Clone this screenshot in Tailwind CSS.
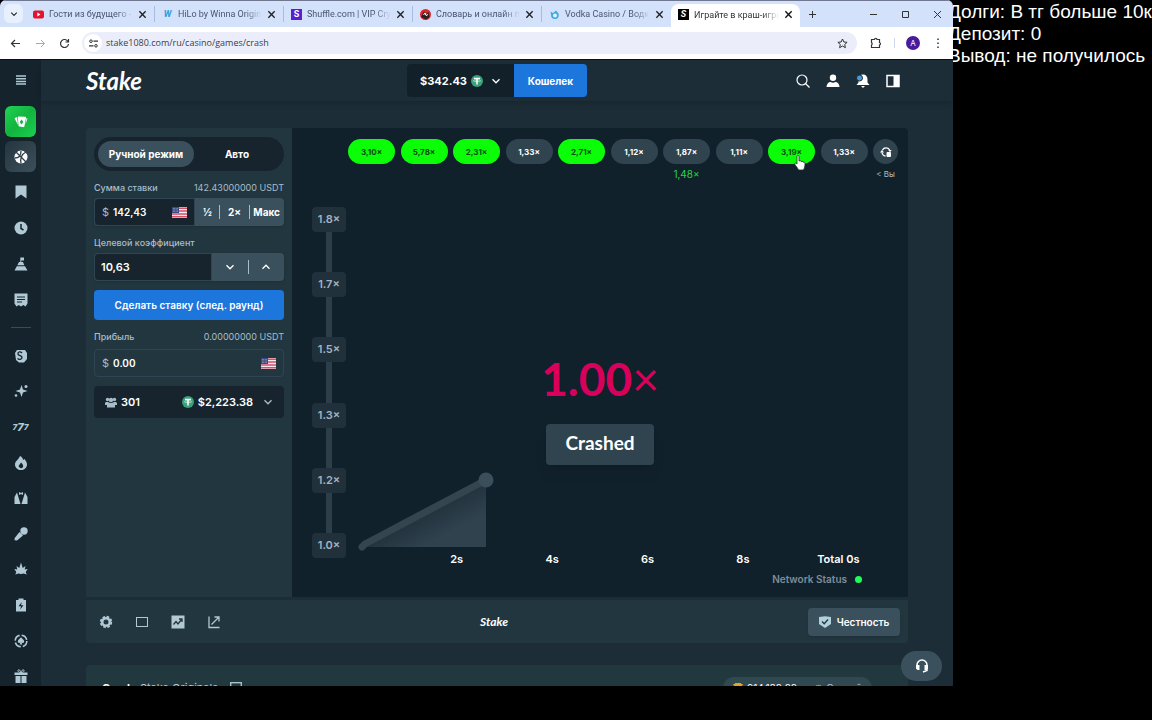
<!DOCTYPE html>
<html lang="ru">
<head>
  <meta charset="UTF-8" />
  <meta name="viewport" content="width=device-width, initial-scale=1.0"/>
  <title>Crash</title>
  <script src="https://cdn.jsdelivr.net/npm/@tailwindcss/browser@4"></script>
</head>
<body class="bg-black h-screen overflow-hidden flex pb-[34px] text-[11px] leading-4 font-['Inter','Noto_Sans',sans-serif]">

  <!-- shared shapes -->
  <svg class="hidden">
    <symbol id="flag" viewBox="0 0 15 11">
      <rect width="15" height="11" fill="#f3e9ee"/>
      <path d="M0 1.2h15M0 4h15M0 7h15M0 9.8h15" stroke="#d4506a" stroke-width="1.4"/>
      <rect width="7" height="6" fill="#3a4a80"/>
      <path d="M1 1.5h5M1 3h5M1 4.5h5" stroke="#c9d0e8" stroke-width=".6" stroke-dasharray=".7 .7"/>
    </symbol>
    <symbol id="tether" viewBox="0 0 12 12">
      <circle cx="6" cy="6" r="6" fill="#3aa27a"/>
      <path d="M3 3.6h6M6 3.6v6" stroke="#fff" stroke-width="1.5"/>
      <ellipse cx="6" cy="5.8" rx="3.6" ry=".9" fill="none" stroke="#fff" stroke-width=".5"/>
    </symbol>
    <symbol id="down" viewBox="0 0 10 10"><path d="M1.5 3.2 5 6.8l3.500-3.600" fill="none" stroke="currentColor" stroke-width="1.3"/></symbol>
    <symbol id="close" viewBox="0 0 8 8"><path d="M1.200 1.200 6.800 6.800M6.800 1.200 1.200 6.800" stroke="currentColor" stroke-width="1.200"/></symbol>
  </svg>

  <div class="relative flex-1 min-w-0 flex flex-col overflow-hidden rounded-t-md">

    <!-- tab strip -->
    <div class="h-[27px] shrink-0 flex bg-[#d3e1fb] border-t border-[#6f7890] text-[9px] text-[#4a5570] font-['Roboto','Noto_Sans',sans-serif]">
      <button class="size-[19px] mt-[3px] ml-1 mr-[3px] shrink-0 rounded-md bg-[#e8f0fe] text-[#222] flex items-center justify-center" aria-label="Поиск вкладок"><svg class="size-2"><use href="#down"/></svg></button>
      <div class="w-[129px] flex items-center gap-[5px] px-[7px] my-[5px] border-r border-[#a9bbe0]">
        <svg class="size-[11px] shrink-0" viewBox="0 0 11 11"><rect y="1.500" width="11" height="8" rx="2" fill="#e3122f"/><path d="M4.300 3.500v4l3.200-2z" fill="#fff"/></svg>
        <a href="#" class="flex-1 whitespace-nowrap overflow-hidden mask-r-from-80%">Гости из будущего - 6</a>
        <button class="shrink-0 text-[#222]" aria-label="Закрыть"><svg class="size-[9px]"><use href="#close"/></svg></button>
      </div>
      <div class="w-[129px] flex items-center gap-[5px] px-[7px] my-[5px] border-r border-[#a9bbe0]">
        <span class="w-[11px] shrink-0 text-center font-bold italic text-[#2b9fdc]">W</span>
        <a href="#" class="flex-1 whitespace-nowrap overflow-hidden mask-r-from-80%">HiLo by Winna Origina</a>
        <button class="shrink-0 text-[#222]" aria-label="Закрыть"><svg class="size-[9px]"><use href="#close"/></svg></button>
      </div>
      <div class="w-[129px] flex items-center gap-[5px] px-[7px] my-[5px] border-r border-[#a9bbe0]">
        <span class="size-[11px] leading-[11px] shrink-0 text-center font-bold bg-[#5a1fd0] text-white">S</span>
        <a href="#" class="flex-1 whitespace-nowrap overflow-hidden mask-r-from-80%">Shuffle.com | VIP Cryp</a>
        <button class="shrink-0 text-[#222]" aria-label="Закрыть"><svg class="size-[9px]"><use href="#close"/></svg></button>
      </div>
      <div class="w-[129px] flex items-center gap-[5px] px-[7px] my-[5px] border-r border-[#a9bbe0]">
        <svg class="size-[11px] shrink-0" viewBox="0 0 11 11"><circle cx="5.500" cy="5.500" r="5.500" fill="#d5282c"/><path d="M1 8 4 2.500l2 3 2.500-2.500 1 5-3.500 2.500z" fill="#2b2024"/><path d="m3.500 6 1.500-2 1 2.500 2-1" stroke="#fff" fill="none"/></svg>
        <a href="#" class="flex-1 whitespace-nowrap overflow-hidden mask-r-from-80%">Словарь и онлайн пе</a>
        <button class="shrink-0 text-[#222]" aria-label="Закрыть"><svg class="size-[9px]"><use href="#close"/></svg></button>
      </div>
      <div class="w-[129px] flex items-center gap-[5px] px-[7px] my-[5px]">
        <svg class="size-[11px] shrink-0" viewBox="0 0 11 11"><path d="M1.500 2.500 4 4l3-2.500 2.500 3C10.500 8 8.500 10 6 10S1.800 8.500 2 5.500z" fill="#3fa9e6"/><circle cx="6" cy="6.500" r="2" fill="#e3f3ff"/></svg>
        <a href="#" class="flex-1 whitespace-nowrap overflow-hidden mask-r-from-80%">Vodka Casino / Водка</a>
        <button class="shrink-0 text-[#222]" aria-label="Закрыть"><svg class="size-[9px]"><use href="#close"/></svg></button>
      </div>
      <div class="w-[129px] flex items-center gap-[5px] px-[7px] mt-[3px] pb-[2px] bg-white rounded-t-lg text-[#333]">
        <span class="size-[11px] leading-[11px] shrink-0 text-center font-bold italic bg-black text-white">S</span>
        <a href="#" class="flex-1 whitespace-nowrap overflow-hidden mask-r-from-80%">Играйте в краш-игры</a>
        <button class="shrink-0 text-[#111]" aria-label="Закрыть"><svg class="size-[9px]"><use href="#close"/></svg></button>
      </div>
      <div class="flex-1 flex items-center justify-between pl-2 pr-[11px] text-[#333]">
        <button aria-label="Новая вкладка"><svg class="size-[9px]" viewBox="0 0 9 9"><path d="M4.500 1v7M1 4.500h7" stroke="currentColor"/></svg></button>
        <div class="flex gap-[23px]">
          <button aria-label="Свернуть"><svg class="size-[9px]" viewBox="0 0 9 9"><path d="M1 4.500h7" stroke="currentColor"/></svg></button>
          <button aria-label="Развернуть"><svg class="size-[9px]" viewBox="0 0 9 9"><path d="M1.500 1.500h6v6h-6z" fill="none" stroke="currentColor"/></svg></button>
          <button aria-label="Закрыть окно"><svg class="size-[9px]" viewBox="0 0 9 9"><path d="m1 1 7 7M8 1 1 8" stroke="currentColor"/></svg></button>
        </div>
      </div>
    </div>

    <!-- address bar -->
    <div class="h-[33px] shrink-0 flex items-center bg-white border-b border-[#111] px-[10px] text-[#333]">
      <button aria-label="Назад"><svg class="size-[11px]" viewBox="0 0 11 11"><path d="M10 5.500H1.500M5 2 1.500 5.500 5 9" fill="none" stroke="currentColor" stroke-width="1.200"/></svg></button>
      <button class="ml-[14px] text-[#aaa]" aria-label="Вперёд"><svg class="size-[11px]" viewBox="0 0 11 11"><path d="M1 5.500h8.500M6 2l3.500 3.500L6 9" fill="none" stroke="currentColor"/></svg></button>
      <button class="ml-[13px]" aria-label="Обновить"><svg class="size-[11px]" viewBox="0 0 11 11"><path d="M9 3.500A4 4 0 1 0 9.500 6M9.500 1v3h-3" fill="none" stroke="currentColor" stroke-width="1.200"/></svg></button>
      <div class="ml-3 flex-1 h-[22px] rounded-full bg-[#ebeefa] flex items-center pl-[2px] pr-[9px]">
        <span class="size-[18px] rounded-full bg-white flex items-center justify-center"><svg class="size-[9px]" viewBox="0 0 9 9"><path d="M4.500 2.200H9M0 6.800h4.500" stroke="currentColor" stroke-width="1.200"/><circle cx="2" cy="2.200" r="1.300" fill="none" stroke="currentColor"/><circle cx="7" cy="6.800" r="1.300" fill="none" stroke="currentColor"/></svg></span>
        <input type="text" aria-label="Адрес" value="stake1080.com/ru/casino/games/crash" class="flex-1 min-w-0 ml-1 bg-transparent text-[9px] text-[#3c4043] font-['Open_Sans',sans-serif]"/>
        <button aria-label="В закладки"><svg class="size-[11px]" viewBox="0 0 11 11"><path d="m5.500 1 1.400 3 3.200.3-2.400 2.200.7 3.200-2.900-1.700-2.900 1.700.7-3.200L.900 4.300l3.200-.3z" fill="none" stroke="currentColor"/></svg></button>
      </div>
      <button class="ml-[13px]" aria-label="Расширения"><svg class="size-3" viewBox="0 0 12 12"><path d="M1.500 2.500h3a1.200 1.200 0 0 1 2.500 0h2.500v3a1.300 1.300 0 0 1 0 2.500v2.500h-8V8a1.500 1.500 0 0 0 0-2.500z" fill="none" stroke="currentColor" stroke-width="1.200"/></svg></button>
      <span class="ml-3 w-px h-[10px] bg-[#cfd8ee]"></span>
      <button class="ml-[11px] size-[14px] rounded-full bg-[#4a1a9c] text-white text-[8px] leading-[14px]">A</button>
      <button class="ml-[13px]" aria-label="Меню"><svg class="w-[10px] h-3" viewBox="0 0 10 12"><path d="M5 1.500v9.500" stroke="currentColor" stroke-width="1.500" stroke-dasharray="1.500 2.500"/></svg></button>
    </div>

    <div class="flex-1 min-h-0 flex bg-[#1c2d37]">

      <!-- sidebar -->
      <nav class="w-[41px] shrink-0 flex flex-col items-center bg-[#15232c] text-[#b1c9d4]">
        <button class="h-10 w-full shrink-0 flex items-center justify-center" aria-label="Меню"><svg class="size-[10px]" viewBox="0 0 10 10"><path d="M0 1h10M0 3.700h10M0 6.400h10M0 9.100h10" stroke="currentColor" stroke-width="1.500"/></svg></button>
        <a href="#" aria-label="Казино" class="mt-[6px] size-[31px] shrink-0 rounded-md bg-linear-to-br from-[#1fd355] via-[#12b43d] to-[#1cd052] text-white flex items-center justify-center">
          <svg class="size-[14px]" viewBox="0 0 14 14" fill="currentColor"><path d="M.5 3.200 3 2l1 8zM4.500 1.500l6.500.3c.8 0 1.200.5 1 1.300L10.500 11c-.2 1-.8 1.300-1.600 1.100L5.500 11.500c-.7-.1-1-.6-1-1.300L3.800 2.300c0-.5.3-.8.7-.8zM12.500 3l1 .5-2 6z"/><path d="m7.800 4.500 1.500 2.700-2 2.300-1.500-2.700z" fill="#12b43d"/></svg></a>
        <a href="#" aria-label="Спорт" class="mt-1 size-[31px] shrink-0 rounded-md bg-linear-to-br from-[#26353e] to-[#3b505c] text-white flex items-center justify-center">
          <svg class="size-[14px]" viewBox="0 0 14 14"><circle cx="7" cy="7" r="6.500" fill="currentColor"/><path d="m2 2 10 10M12 2C8 4 6 8 7 13.500M1 8c3 0 6-2 6-7" stroke="#2e3f4a" stroke-width="1.300" fill="none"/></svg></a>
        <div class="mt-[2px] shrink-0">
          <a href="#" aria-label="Избранное" class="h-9 flex items-center"><svg class="size-[14px]" viewBox="0 0 14 14" fill="currentColor"><path d="M1.500.500h11v13L7 9.500l-5.500 4z"/></svg></a>
          <a href="#" aria-label="Недавние" class="h-9 flex items-center"><svg class="size-[14px]" viewBox="0 0 14 14"><circle cx="7" cy="7" r="6.500" fill="currentColor"/><path d="M7 3v4.500l2.500 1.500" stroke="#15232c" stroke-width="1.500" fill="none"/></svg></a>
          <a href="#" aria-label="Испытания" class="h-9 flex items-center"><svg class="size-[14px]" viewBox="0 0 14 14" fill="currentColor"><path d="M6.300.500H10v3H7.300V5H9l1.300 3.200H3.300L5 5h1.300zM2.800 9.200h8.200l2.500 4.300H.500z"/></svg></a>
          <a href="#" aria-label="Ставки" class="h-9 flex items-center"><svg class="size-[14px]" viewBox="0 0 14 14"><path d="M.500.500h13v10l-2 3-2.200-1.500L7 13.500 4.700 12l-2.200 1.500-2-3z" fill="currentColor"/><path d="M3 4h8M3 6.500h8M3 9h5" stroke="#15232c" stroke-width="1.200"/></svg></a>
        </div>
        <hr class="w-5 mt-[9px] mb-[10px] shrink-0 border-[#3a4c57]"/>
        <div class="flex-1 min-h-0 -mb-2 flex flex-col">
          <a href="#" aria-label="Stake Originals" class="flex-1 flex items-center"><svg class="size-[14px]" viewBox="0 0 14 14"><path d="M3 1h8l2 3v6l-3 3.500H5L2 11 1 4z" fill="currentColor"/><path d="M8 4C6 2 3.500 3 4 5s4 1.500 4 3.500S5 11 3.500 9.500" fill="none" stroke="#15232c" stroke-width="1.300"/></svg></a>
          <a href="#" aria-label="Эксклюзив" class="flex-1 flex items-center"><svg class="size-[14px]" viewBox="0 0 14 14" fill="currentColor"><path d="M7.500 1 9 5.500 13.500 7 9 8.500 7.500 13 6 8.500 1.500 7 6 5.500z"/><circle cx="2" cy="11.500" r="1.300"/><circle cx="12" cy="2.500" r="1.500"/></svg></a>
          <a href="#" aria-label="Слоты" class="flex-1 flex items-center justify-center w-[14px] font-extrabold italic text-[8px]"><span>7</span><span class="text-[11px]">7</span><span>7</span></a>
          <a href="#" aria-label="Популярное" class="flex-1 flex items-center"><svg class="size-[14px]" viewBox="0 0 14 14"><path d="M6 0c2 1 3 2.500 3 4l1.500-1C12 5 13 6.500 13 8.500 13 12 10 14 7 14s-6-2-6-5.500C1 5 4.500 4 6 0z" fill="currentColor"/><path d="M7 6.500c2 2 2.500 3 2 4.500S6 12.500 5 11s1-2.500 2-4.500z" fill="#15232c"/></svg></a>
          <a href="#" aria-label="Живые игры" class="flex-1 flex items-center"><svg class="size-[14px]" viewBox="0 0 14 14" fill="currentColor"><path d="M3 1.500 6.500 13H.500V6zM11 1.500 7.500 13h6V6zM5 1l2 1 2-1v3L7 3 5 4z"/></svg></a>
          <a href="#" aria-label="Шоу" class="flex-1 flex items-center"><svg class="size-[14px]" viewBox="0 0 14 14" fill="currentColor"><circle cx="10" cy="4" r="3.700"/><path d="m5.500 5 3.500 3.500L3 13.500.500 13.300l.200-2.300z"/></svg></a>
          <a href="#" aria-label="Новинки" class="flex-1 flex items-center"><svg class="size-[14px]" viewBox="0 0 14 14" fill="currentColor"><path d="m7 .500 1.700 5.500 2.800-2-.8 3.500 3-.5-2 3 1 2.500-3-1L7 12l-2.700-.5-3 1 1-2.500-2-3 3 .5L2.500 4l2.800 2z"/></svg></a>
          <a href="#" aria-label="Турбо" class="flex-1 flex items-center"><svg class="size-[14px]" viewBox="0 0 14 14"><path d="M4.500.500h5V2H12v11.500H2V2h2.500z" fill="currentColor"/><path d="M7.800 4 4.500 8.300H7L6.200 11.500l3.300-4.300H7z" fill="#15232c"/></svg></a>
          <a href="#" aria-label="Покер" class="flex-1 flex items-center"><svg class="size-[14px]" viewBox="0 0 14 14"><circle cx="7" cy="7" r="5.800" fill="none" stroke="currentColor" stroke-width="1.600" stroke-dasharray="7 2.100"/><path d="M7 3.200c1 1.500 3.200 2.500 3.200 4.300 0 1.400-1.700 2-2.600 1.100l.7 2H5.700l.7-2c-.9.900-2.600.3-2.600-1.100C3.800 5.700 6 4.700 7 3.200z" fill="currentColor"/></svg></a>
          <a href="#" aria-label="Акции" class="flex-1 flex items-center"><svg class="size-[14px]" viewBox="0 0 14 14" fill="currentColor"><path d="M.500 3.500h13V6H.500zM1.500 7h5v7h-5zM7.500 7h5v7h-5z"/><path d="M7 3.500C5 3.500 3.500 2.500 4 1.300S6.500 1 7 3.500c.5-2.500 2.500-3.400 3-2.200S9 3.500 7 3.500z" fill="none" stroke="currentColor"/></svg></a>
        </div>
      </nav>

      <main class="flex-1 min-w-0 flex flex-col text-white">
        <header class="h-[41px] shrink-0 px-[45px] grid grid-cols-[1fr_auto_1fr] items-center shadow-md">
          <a href="#" class="font-['Lato',sans-serif] font-bold italic text-[24px] leading-8">Stake</a>
          <div class="flex h-[33px] font-bold">
            <button class="w-[107px] rounded-l bg-[#12202a] flex items-center justify-center gap-1">$342.43 <svg class="size-3"><use href="#tether"/></svg><svg class="size-[10px] ml-1"><use href="#down"/></svg></button>
            <button class="w-[73px] rounded-r bg-[#1c76dc] text-[10px]">Кошелек</button>
          </div>
          <div class="flex justify-end gap-4 pr-2">
            <button aria-label="Поиск"><svg class="size-[14px]" viewBox="0 0 14 14"><circle cx="6" cy="6" r="5" fill="none" stroke="currentColor" stroke-width="1.200"/><path d="m9.500 9.500 4 4" stroke="currentColor" stroke-width="1.200"/></svg></button>
            <button aria-label="Профиль"><svg class="size-[14px]" viewBox="0 0 14 14" fill="currentColor"><circle cx="7" cy="3.700" r="3.200"/><path d="M.500 13c0-3 2-5 4-5 1.500 1 3.500 1 5 0 2 0 4 2 4 5z"/></svg></button>
            <button aria-label="Уведомления"><svg class="size-[14px]" viewBox="0 0 14 14" fill="currentColor"><path d="M7 .500c3 0 4.500 2 4.500 5v3l2 2.500H.500l2-2.500v-3C2.500 2.500 4 .500 7 .500zM5 12h4l-2 2z"/><circle cx="3.500" cy="4" r="3" fill="#4c9bd8" stroke="#1c2d37"/></svg></button>
            <button aria-label="Чат"><svg class="size-[14px]" viewBox="0 0 14 14"><rect x="1" y="1.500" width="12" height="11" fill="none" stroke="currentColor" stroke-width="1.500"/><path d="M7.500 1.500H13v11H7.500z" fill="currentColor"/></svg></button>
          </div>
        </header>

        <div class="px-[45px] pt-[27px]">
          <div class="flex rounded-t overflow-hidden bg-[#22363f] h-[469px]">

            <!-- bet form -->
            <form class="w-[206px] shrink-0 px-2 pt-[9px] flex flex-col gap-[9px]">
              <div class="h-[34px] p-1 rounded-full bg-[#17242d] grid grid-cols-[96px_1fr] font-bold text-[10px]">
                <button type="button" class="rounded-full bg-[#3a505c]">Ручной режим</button>
                <button type="button">Авто</button>
              </div>
              <div>
                <div class="flex justify-between h-4 mb-[2px] text-[9px] text-[#a9bdc8]"><label for="bet" class="font-medium">Сумма ставки</label><span>142.43000000 USDT</span></div>
                <div class="flex h-7 rounded-sm bg-[#3a505c] shadow">
                  <div class="w-[101px] flex items-center px-[7px] rounded-l-sm bg-[#17242d] border border-[#2f4553]">
                    <span class="text-[#a9bdc8]">$</span>
                    <input id="bet" type="text" value="142,43" class="flex-1 min-w-0 ml-1 font-semibold text-[10px] bg-transparent"/>
                    <svg class="w-[15px] h-[11px] shrink-0"><use href="#flag"/></svg>
                  </div>
                  <div class="flex-1 flex items-center justify-between px-1 font-bold text-[10px]">
                    <button type="button" class="px-1">½</button><span class="w-px h-[14px] bg-[#a9bdc8]"></span>
                    <button type="button" class="px-1">2×</button><span class="w-px h-[14px] bg-[#a9bdc8]"></span>
                    <button type="button">Макс</button>
                  </div>
                </div>
              </div>
              <div>
                <label for="target" class="block h-4 mb-[2px] text-[9px] font-medium text-[#a9bdc8]">Целевой коэффициент</label>
                <div class="flex h-7 rounded-sm bg-[#3a505c] shadow">
                  <input id="target" type="text" value="10,63" class="w-[118px] px-[6px] font-semibold rounded-l-sm bg-[#17242d] border border-[#2f4553]"/>
                  <div class="flex-1 flex items-center">
                    <button type="button" class="flex-1 flex justify-center" aria-label="Меньше"><svg class="size-[10px]"><use href="#down"/></svg></button>
                    <span class="w-px h-[14px] bg-[#a9bdc8]"></span>
                    <button type="button" class="flex-1 flex justify-center" aria-label="Больше"><svg class="size-[10px] rotate-180"><use href="#down"/></svg></button>
                  </div>
                </div>
              </div>
              <button type="button" class="h-[30px] rounded bg-[#1c76dc] font-semibold text-[10px]">Сделать ставку (след. раунд)</button>
              <div>
                <div class="flex justify-between h-4 mb-1 text-[9px] text-[#a9bdc8]"><label for="profit" class="font-medium">Прибыль</label><span>0.00000000 USDT</span></div>
                <div class="flex items-center h-7 px-[7px] rounded-sm border border-[#2f4553]">
                  <span class="text-[#a9bdc8]">$</span>
                  <input id="profit" type="text" value="0.00" readonly class="flex-1 min-w-0 ml-1 font-semibold text-[10px] bg-transparent"/>
                  <svg class="w-[15px] h-[11px] shrink-0"><use href="#flag"/></svg>
                </div>
              </div>
              <button type="button" class="h-8 px-[11px] rounded bg-[#17242d] flex items-center font-semibold">
                <svg class="w-3 h-[11px] text-[#a9bdc8]" viewBox="0 0 12 11" fill="currentColor"><circle cx="2.500" cy="2.500" r="1.700"/><circle cx="9.500" cy="2.500" r="1.700"/><circle cx="6" cy="3" r="2.200"/><path d="M0 8V6.500C0 5 1.500 4.700 3 5c1.500 1.300 4.500 1.300 6 0 1.500-.3 3 0 3 1.500V8h-2v2.500H2V8z"/></svg>
                <span class="ml-1">301</span>
                <svg class="size-3 ml-auto"><use href="#tether"/></svg>
                <span class="ml-1">$2,223.38</span>
                <svg class="size-[10px] ml-[10px] text-[#a9bdc8]"><use href="#down"/></svg>
              </button>
            </form>

            <!-- graph -->
            <section class="relative flex-1 min-w-0 flex flex-col bg-[#11212b]">
              <div class="h-[79px] shrink-0 pt-[11px] pl-[56px] pr-[10px] flex justify-between text-[8px] font-bold text-center">
                <button class="w-[47px] h-[25px] rounded-full bg-[#0cfd08] text-[#0b4a14]">3,10×</button>
                <button class="w-[47px] h-[25px] rounded-full bg-[#0cfd08] text-[#0b4a14]">5,78×</button>
                <button class="w-[47px] h-[25px] rounded-full bg-[#0cfd08] text-[#0b4a14]">2,31×</button>
                <button class="w-[47px] h-[25px] rounded-full bg-[#304450]">1,33×</button>
                <button class="w-[47px] h-[25px] rounded-full bg-[#0cfd08] text-[#0b4a14]">2,71×</button>
                <button class="w-[47px] h-[25px] rounded-full bg-[#304450]">1,12×</button>
                <div class="w-[47px]">
                  <button class="w-full h-[25px] rounded-full bg-[#304450]">1,87×</button>
                  <p class="mt-[2px] text-[10px] font-normal text-[#27d445]">1,48×</p>
                </div>
                <button class="w-[47px] h-[25px] rounded-full bg-[#304450]">1,11×</button>
                <div class="relative w-[47px]">
                  <button class="w-full h-[25px] rounded-full bg-[#0cfd08] text-[#0b4a14]">3,19×</button>
                  <svg class="absolute left-[26px] top-4 w-3 h-4" viewBox="0 0 12 16"><path d="M3 1.500c0-1.300 2-1.300 2 0V6l1.500-.3.500.800 1.500-.2.500.900c1.500-.3 2 .3 2 1.500 0 3-.5 4-1.500 6.300H4.500C3.500 12.500 2 11.500.8 9.200.300 8 1.500 7.500 3 9z" fill="#fff" stroke="#14301a" stroke-width=".8"/></svg>
                </div>
                <button class="w-[47px] h-[25px] rounded-full bg-[#304450]">1,33×</button>
                <div class="w-[25px]">
                  <button class="size-[25px] rounded-full bg-[#304450] flex items-center justify-center" aria-label="История"><svg class="size-3" viewBox="0 0 12 12"><path d="M9.800 4.500A4 4 0 0 0 2.500 4M2 6.500A4 4 0 0 0 5.500 10" fill="none" stroke="currentColor" stroke-width="1.300"/><path d="M0 6.500h4L2 3.800zM8.300 4h3.400L10 6.200z" fill="currentColor"/><rect x="6.500" y="6" width="4.500" height="5" rx="1" fill="currentColor"/></svg></button>
                  <p class="mt-[2px] font-normal whitespace-nowrap text-[#a9bdc8]">&lt; Вы</p>
                </div>
              </div>

              <div class="flex-1 min-h-0 flex pl-5 font-semibold">
                <div class="w-[34px] h-[351px] flex flex-col items-center text-[#a5b3c1]">
                  <span class="w-full h-[25px] leading-[25px] rounded-sm text-center bg-[#20313c]">1.8×</span>
                  <i class="flex-1 w-[6px] bg-[#2c3e4a]"></i>
                  <span class="w-full h-[25px] leading-[25px] rounded-sm text-center bg-[#20313c]">1.7×</span>
                  <i class="flex-1 w-[6px] bg-[#2c3e4a]"></i>
                  <span class="w-full h-[25px] leading-[25px] rounded-sm text-center bg-[#20313c]">1.5×</span>
                  <i class="flex-1 w-[6px] bg-[#2c3e4a]"></i>
                  <span class="w-full h-[25px] leading-[25px] rounded-sm text-center bg-[#20313c]">1.3×</span>
                  <i class="flex-1 w-[6px] bg-[#2c3e4a]"></i>
                  <span class="w-full h-[25px] leading-[25px] rounded-sm text-center bg-[#20313c]">1.2×</span>
                  <i class="flex-1 w-[6px] bg-[#2c3e4a]"></i>
                  <span class="w-full h-[25px] leading-[25px] rounded-sm text-center bg-[#20313c]">1.0×</span>
                </div>
                <div class="flex-1 flex flex-col justify-end pl-3 pb-[10px]">
                  <svg class="w-[140px] h-[81px]" viewBox="0 0 140 81">
                    <defs><linearGradient id="area" gradientUnits="userSpaceOnUse" x1="66" y1="43" x2="80" y2="69"><stop offset="0" stop-color="#22323d"/><stop offset="1" stop-color="#2f424e"/></linearGradient></defs>
                    <path d="M4 77 128 10v67z" fill="url(#area)"/>
                    <path d="M4 77 7 74 128 10" fill="none" stroke="#33454f" stroke-width="7" stroke-linecap="round"/>
                    <circle cx="128" cy="10" r="7.500" fill="#3b4f5b"/>
                  </svg>
                  <div class="pl-[51px] pr-[22px] grid grid-cols-5 text-center">
                    <span>2s</span><span>4s</span><span>6s</span><span>8s</span><span>Total 0s</span>
                  </div>
                  <div class="mt-1 pr-[46px] flex items-center justify-end gap-2 text-[10px] text-[#7d8e9b]">Network Status <i class="size-[7px] rounded-full bg-[#1fff55]"></i></div>
                </div>
              </div>

              <div class="absolute inset-x-0 top-[226px] flex flex-col items-center">
                <p class="text-[46px] leading-[50px] font-bold text-[#d9005b] font-['Lato',sans-serif]">1.00<span class="font-normal">×</span></p>
                <p class="mt-5 w-[108px] h-[41px] leading-[38px] rounded-sm text-center text-[19px] font-bold bg-[#304450] shadow-lg font-['Lato',sans-serif]">Crashed</p>
              </div>
            </section>
          </div>

          <div class="mt-[3px] h-[43px] rounded-b bg-[#22363f] pl-[2px] pr-2 grid grid-cols-[1fr_auto_1fr] items-center">
            <div class="flex text-[#b1c9d4]">
              <button class="w-9 flex justify-center" aria-label="Настройки"><svg class="size-[14px]" viewBox="0 0 14 14"><circle cx="7" cy="7" r="3.800" fill="none" stroke="currentColor" stroke-width="2.600"/><circle cx="7" cy="7" r="5.300" fill="none" stroke="currentColor" stroke-width="1.800" stroke-dasharray="2.600 1.560"/></svg></button>
              <button class="w-9 flex justify-center" aria-label="Широкий режим"><svg class="size-[14px]" viewBox="0 0 14 14"><rect x="1.500" y="2.500" width="11" height="9" fill="none" stroke="currentColor"/></svg></button>
              <button class="w-9 flex justify-center" aria-label="Статистика"><svg class="size-[14px]" viewBox="0 0 14 14"><rect x=".5" y=".5" width="13" height="13" fill="currentColor"/><path d="M2.500 9.500 5 6.500l2 2.500 4-5M8 4h3v3" fill="none" stroke="#22363f" stroke-width="1.300"/></svg></button>
              <button class="w-9 flex justify-center" aria-label="Открыть"><svg class="size-[14px]" viewBox="0 0 14 14"><path d="M2 1.500v11h10.500M4.500 9.500l7-7M7.500 2h4.500v4.500" fill="none" stroke="currentColor" stroke-width="1.300"/></svg></button>
            </div>
            <span class="font-['Lato',sans-serif] font-bold italic text-[12px]">Stake</span>
            <button class="justify-self-end w-[92px] h-7 rounded bg-[#3a505c] font-semibold text-[10px] flex items-center justify-center gap-[6px] shadow">
              <svg class="size-3" viewBox="0 0 12 12"><path d="M0 1 6 .300 12 1v7L6 12 0 8z" fill="#b1d0dc"/><path d="m3 5.500 2.200 2.200L9 3.500" fill="none" stroke="#22363f" stroke-width="1.300"/></svg>Честность
            </button>
          </div>

          <div class="mt-[22px] pt-3 pl-4 pr-[14px] rounded-t bg-[#22383f] flex items-center">
            <b>Crash</b><span class="ml-[6px] text-[#b1c9d4]">Stake Originals</span>
            <svg class="ml-3 size-3 text-[#b1c9d4]" viewBox="0 0 12 12"><rect x=".7" y=".7" width="10.600" height="10.600" fill="none" stroke="currentColor" stroke-width="1.300"/></svg>
            <span class="ml-auto w-[149px] h-[22px] px-[10px] rounded-full bg-[#304850] flex items-center text-[10px] whitespace-nowrap">
              <svg class="size-[10px] mr-1 shrink-0" viewBox="0 0 10 10"><path d="M0 1h10L8 5H2z" fill="#e0a42a"/><path d="M2 0h6v5L5 8 2 5zM3 9h4" fill="#e0a42a"/></svg>914,182.22
              <span class="ml-auto text-[#b1c9d4]">♛ Случай</span></span>
            <button class="ml-3 text-[#b1c9d4]" aria-label="Развернуть"><svg class="size-[10px]"><use href="#down"/></svg></button>
          </div>
        </div>
      </main>
    </div>

    <button class="absolute right-[11px] bottom-[5px] w-[41px] h-[30px] rounded-full bg-[#3a505c] text-white flex items-center justify-center" aria-label="Поддержка"><svg class="size-[14px]" viewBox="0 0 14 14"><path d="M2 8V6a5 5 0 0 1 10 0v5.500L8 13" fill="none" stroke="currentColor" stroke-width="1.500"/><path d="M1 6h3.500v5H2.500L1 9.500zM13 6H9.500v5h2L13 9.500z" fill="currentColor"/></svg></button>
  </div>

  <aside class="w-[199px] shrink-0 overflow-hidden pt-px text-white text-[19px] leading-[22px] whitespace-nowrap font-['Liberation_Sans',sans-serif]">
    <div class="-ml-[5px]">
      <p>Долги: В тг больше 10к</p>
      <p>Депозит: 0</p>
      <p>Вывод: не получилось</p>
    </div>
  </aside>
</body>
</html>
